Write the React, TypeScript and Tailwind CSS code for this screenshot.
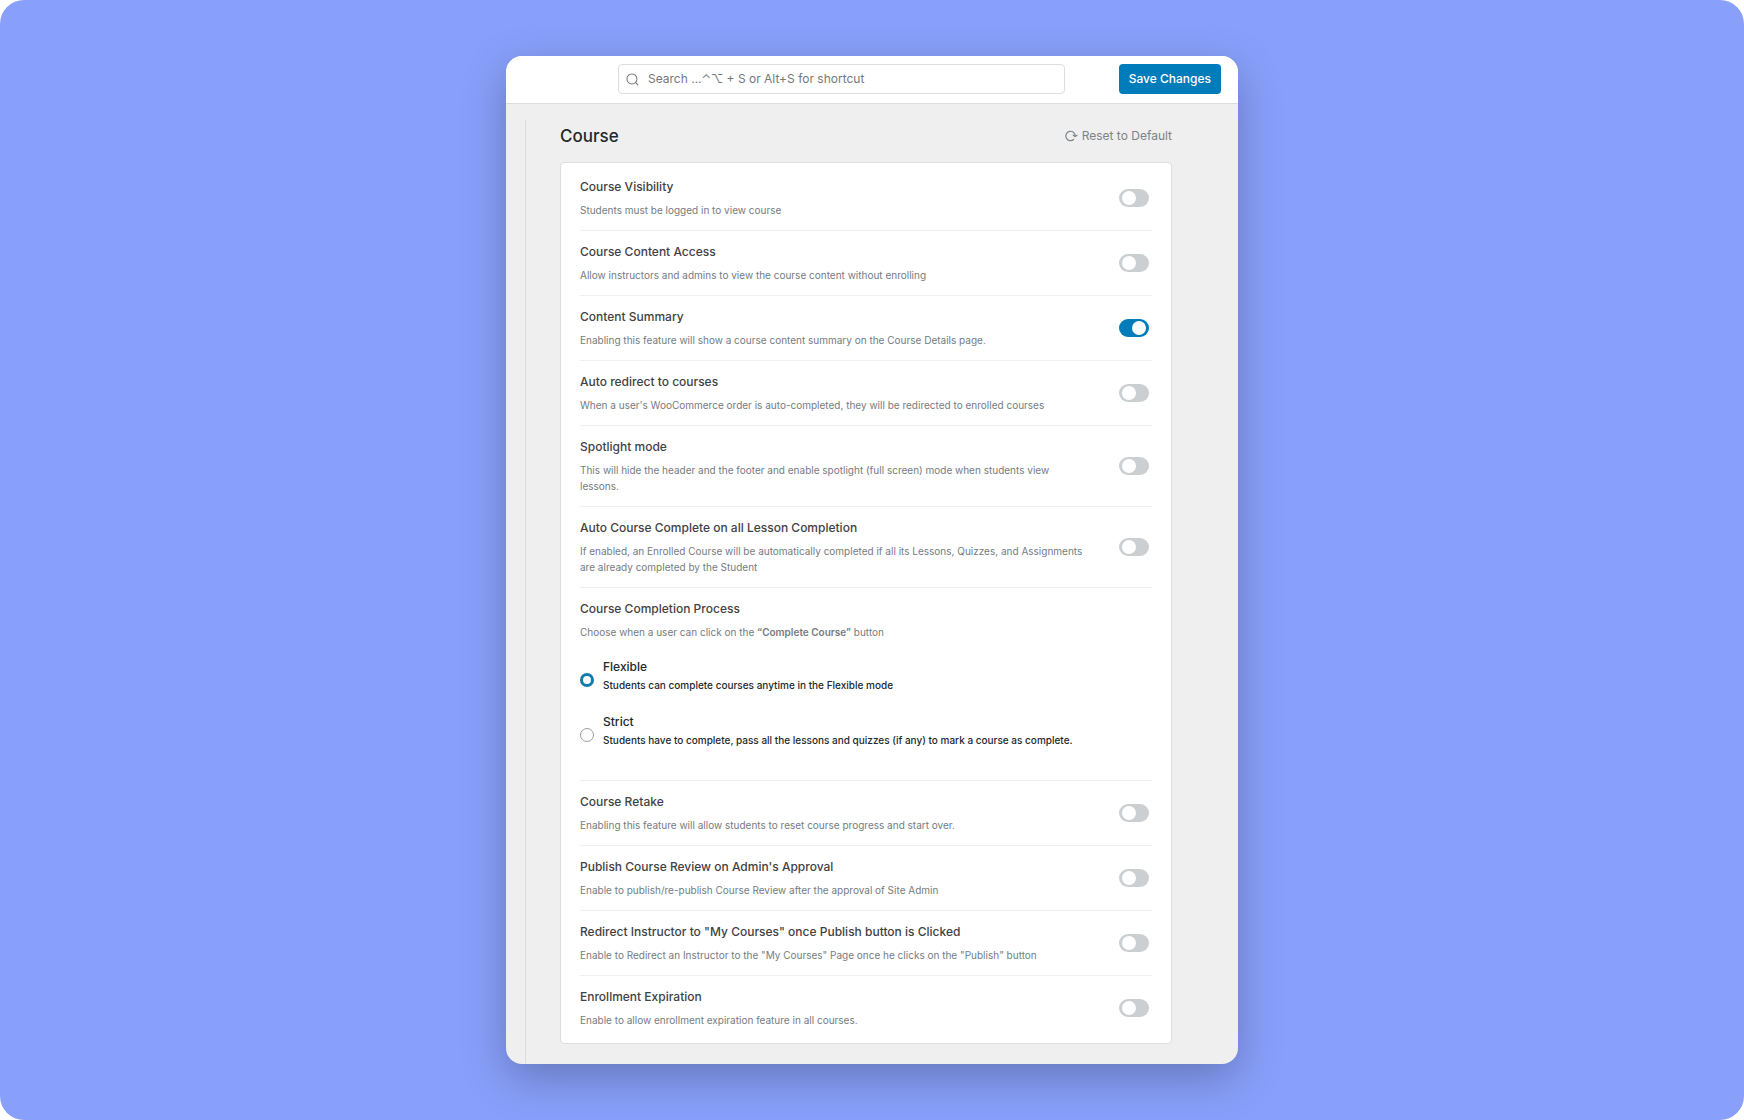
import { useState } from 'react';

type Setting = {
  id: string;
  title: string;
  description: string;
  enabled?: boolean;
};

const generalSettings: Setting[] = [
  { id: 'visibility', title: 'Course Visibility', description: 'Students must be logged in to view course' },
  { id: 'content-access', title: 'Course Content Access', description: 'Allow instructors and admins to view the course content without enrolling' },
  { id: 'summary', title: 'Content Summary', description: 'Enabling this feature will show a course content summary on the Course Details page.', enabled: true },
  { id: 'auto-redirect', title: 'Auto redirect to courses', description: "When a user's WooCommerce order is auto-completed, they will be redirected to enrolled courses" },
  { id: 'spotlight', title: 'Spotlight mode', description: 'This will hide the header and the footer and enable spotlight (full screen) mode when students view lessons.' },
  { id: 'auto-complete', title: 'Auto Course Complete on all Lesson Completion', description: 'If enabled, an Enrolled Course will be automatically completed if all its Lessons, Quizzes, and Assignments are already completed by the Student' },
];

const publishSettings: Setting[] = [
  { id: 'retake', title: 'Course Retake', description: 'Enabling this feature will allow students to reset course progress and start over.' },
  { id: 'review', title: "Publish Course Review on Admin's Approval", description: 'Enable to publish/re-publish Course Review after the approval of Site Admin' },
  { id: 'redirect-instructor', title: 'Redirect Instructor to "My Courses" once Publish button is Clicked', description: 'Enable to Redirect an Instructor to the "My Courses" Page once he clicks on the "Publish" button' },
  { id: 'expiration', title: 'Enrollment Expiration', description: 'Enable to allow enrollment expiration feature in all courses.' },
];

const completionModes = [
  { id: 'flexible', title: 'Flexible', description: 'Students can complete courses anytime in the Flexible mode' },
  { id: 'strict', title: 'Strict', description: 'Students have to complete, pass all the lessons and quizzes (if any) to mark a course as complete.' },
];

function SettingRow({ setting }: { setting: Setting }) {
  const [on, setOn] = useState(Boolean(setting.enabled));

  return (
    <div className="flex items-center justify-between gap-6 border-b border-[#efefef] pt-[11px] pr-[3px] pb-3 last:border-b-0">
      <div className="max-w-[508px]">
        <label htmlFor={setting.id} className="block text-[12px] leading-5 font-medium text-[#3f4245]">
          {setting.title}
        </label>
        <p id={`${setting.id}-hint`} className="mt-[5px] text-[10px] leading-4 text-[#757c82]">{setting.description}</p>
      </div>
      <input
        id={setting.id}
        type="checkbox"
        role="switch"
        aria-describedby={`${setting.id}-hint`}
        checked={on}
        onChange={(e) => setOn(e.target.checked)}
        className="flex h-[18px] w-[30px] shrink-0 cursor-pointer appearance-none items-center rounded-full bg-[#cccfd1] px-[3px] before:size-[14px] before:rounded-full before:bg-white checked:justify-end checked:bg-[#007cba]"
      />
    </div>
  );
}

function CompletionProcess() {
  const [mode, setMode] = useState('flexible');

  return (
    <fieldset className="border-b border-[#efefef] pt-[11px] pb-8">
      <legend className="float-left w-full text-[12px] leading-5 font-medium text-[#3f4245]">Course Completion Process</legend>
      <p className="clear-both pt-[5px] text-[10px] leading-4 text-[#757c82]">
        Choose when a user can click on the <strong className="font-semibold">“Complete Course”</strong> button
      </p>
      <div className="mt-[17px] flex flex-col gap-[19px]">
        {completionModes.map((m) => (
          <label key={m.id} className="flex cursor-pointer items-center gap-[9px] text-[#23282d]">
            <input
              type="radio"
              name="completion"
              value={m.id}
              checked={mode === m.id}
              onChange={() => setMode(m.id)}
              className="mt-2.5 size-3.5 shrink-0 appearance-none rounded-full border border-[#9a9da1] bg-white checked:border-3 checked:border-[#0f7bb0]"
            />
            <span className="flex flex-col">
              <span className="text-[12px] leading-5 font-medium">{m.title}</span>
              <span className="text-[10px] leading-4 font-medium">{m.description}</span>
            </span>
          </label>
        ))}
      </div>
    </fieldset>
  );
}

export default function App() {
  return (
    <div className="min-h-screen bg-white font-['Inter',sans-serif]">
      <div className="flex min-h-screen items-start justify-center rounded-3xl bg-[#88a0fb] px-6 py-14">
        <main className="w-full max-w-[732px] overflow-hidden rounded-2xl bg-[#efefef] shadow-[0_14px_44px_rgba(0,0,0,0.26)]">
          <header className="flex h-12 items-start border-b border-[#dcdde0] bg-white pt-2 pr-[17px] pl-28">
            <div className="flex h-[30px] flex-1 items-center gap-[9px] rounded border border-[#dcdde0] px-[7px]">
              <svg viewBox="0 0 14 14" className="size-[13px] shrink-0 text-[#6f7478]" fill="none" stroke="currentColor" strokeWidth="1.1" strokeLinecap="round">
                <circle cx="6.4" cy="6.4" r="5.4" />
                <path d="M10.4 10.4 12.8 12.8" />
              </svg>
              <input
                type="search"
                aria-label="Search settings"
                placeholder="Search ...⌃⌥ + S or Alt+S for shortcut"
                className="min-w-0 flex-1 bg-transparent text-[12px] leading-4 text-[#3f4245] outline-none placeholder:text-[#74787c]"
              />
            </div>
            <button type="button" className="ml-[54px] h-[30px] rounded bg-[#007cba] px-2.5 text-[12px] font-medium text-white">
              Save Changes
            </button>
          </header>

          <div className="pt-4 pl-[19px]">
            <div className="border-l border-[#dcdde0] pr-[66px] pb-5 pl-[34px]">
              <div className="flex h-[42px] items-start justify-between">
                <h1 className="text-[17px] leading-8 font-medium text-[#23282d]">Course</h1>
                <button type="button" className="flex h-8 items-center gap-1 text-[12px] text-[#7b8288]">
                  <svg viewBox="0 0 14 14" className="size-3.5" fill="none" stroke="currentColor" strokeWidth="1.2" strokeLinecap="round" strokeLinejoin="round">
                    <path d="M9.6 10.5A4.7 4.7 0 1 1 11.2 7.2" />
                    <path d="M9.3 6.2 11.2 7.6 12.9 6.2" />
                  </svg>
                  Reset to Default
                </button>
              </div>
              <section className="rounded border border-[#dcdde0] bg-white px-[19px] py-[3px]">
                {generalSettings.map((s) => (
                  <SettingRow key={s.id} setting={s} />
                ))}
                <CompletionProcess />
                {publishSettings.map((s) => (
                  <SettingRow key={s.id} setting={s} />
                ))}
              </section>
            </div>
          </div>
        </main>
      </div>
    </div>
  );
}
